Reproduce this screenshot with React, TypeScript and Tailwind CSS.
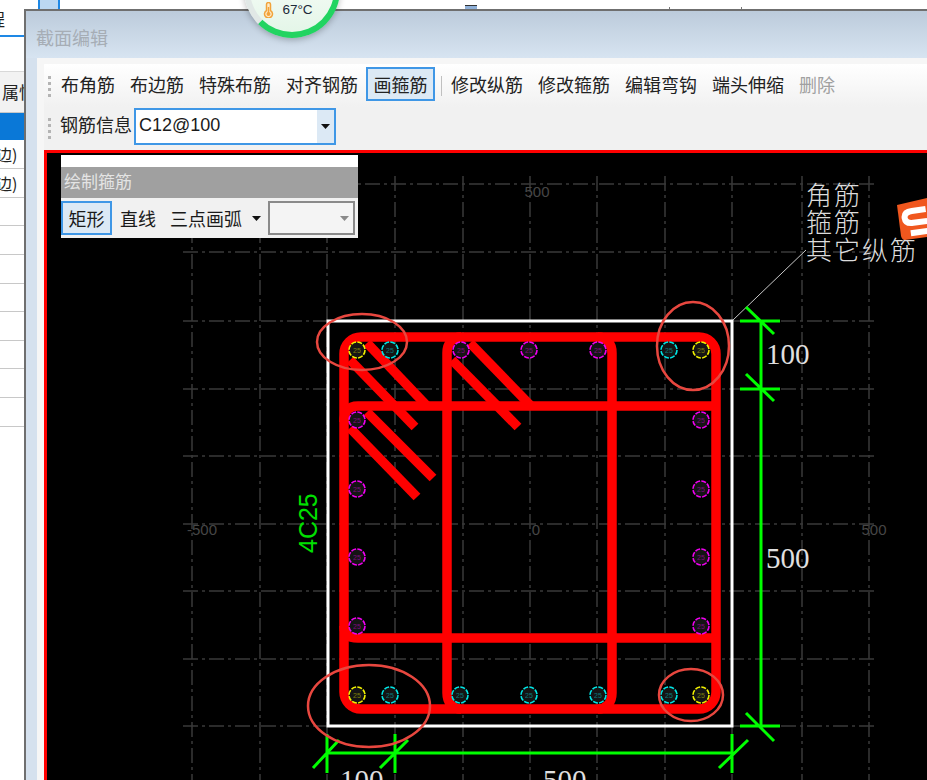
const CJK = "font-['Noto_Sans_CJK_SC','Noto_Sans',sans-serif]";

const tools1 = ["布角筋", "布边筋", "特殊布筋", "对齐钢筋"];
const tools2 = ["修改纵筋", "修改箍筋", "编辑弯钩", "端头伸缩"];

const gridX = [192, 260, 327, 395, 463, 530, 597, 665, 732, 802, 869];
const gridY = [184, 252, 321, 389, 456, 524, 591, 659, 726];

const YELLOW = "#f0f000";
const CYAN = "#00e5e5";
const MAGENTA = "#f000f0";

const bars: [number, number, string][] = [
  [357, 350, YELLOW],
  [390, 350, CYAN],
  [461, 350, MAGENTA],
  [529, 350, MAGENTA],
  [598, 350, MAGENTA],
  [669, 350, CYAN],
  [701, 350, YELLOW],
  [357, 420, MAGENTA],
  [357, 489, MAGENTA],
  [357, 557, MAGENTA],
  [357, 626, MAGENTA],
  [701, 420, MAGENTA],
  [701, 489, MAGENTA],
  [701, 557, MAGENTA],
  [701, 626, MAGENTA],
  [357, 695, YELLOW],
  [390, 695, CYAN],
  [460, 695, CYAN],
  [529, 695, CYAN],
  [598, 695, CYAN],
  [669, 695, CYAN],
  [701, 695, YELLOW],
];

const hooks = [
  [350, 360, 415, 427],
  [367, 343, 428, 407],
  [452, 360, 518, 427],
  [470, 343, 532, 407],
  [350, 428, 417, 497],
  [367, 412, 433, 478],
];

const Grip = () => (
  <div className="flex w-[4px] flex-col gap-[3px]">
    <div className="h-[3px] w-[3px] bg-[#b4b4b4]" />
    <div className="h-[3px] w-[3px] bg-[#b4b4b4]" />
    <div className="h-[3px] w-[3px] bg-[#b4b4b4]" />
    <div className="h-[3px] w-[3px] bg-[#b4b4b4]" />
  </div>
);

const Caret = ({ color = "#111" }: { color?: string }) => (
  <svg width="9" height="5" viewBox="0 0 9 5">
    <path d="M0 0h9L4.5 5z" fill={color} />
  </svg>
);

// 绘图区，坐标直接用截图坐标，viewBox 偏移到画布左上角
const Drawing = () => (
  <svg className="block h-[627px] w-[880px]" viewBox="47 153 880 627">
    <rect x="47" y="153" width="880" height="627" fill="#000" />

    <g stroke="#3a3a3a" strokeWidth="1.5" strokeDasharray="15 4 3 4" fill="none">
      {gridX.map((x) => (
        <line key={x} x1={x} y1="176" x2={x} y2="780" />
      ))}
      {gridY.map((y) => (
        <line key={y} x1="183" y1={y} x2="878" y2={y} />
      ))}
    </g>

    <g fill="#464646" fontSize="15" fontFamily="'Liberation Sans',sans-serif" textAnchor="middle">
      <text x="537" y="197">500</text>
      <text x="202" y="535">-500</text>
      <text x="536" y="535">0</text>
      <text x="874" y="535">500</text>
    </g>

    <rect x="328" y="321" width="404" height="405" fill="none" stroke="#fff" strokeWidth="3" />
    <line x1="733" y1="320" x2="806" y2="250" stroke="#c8c8c8" strokeWidth="1" />

    <g fill="none" stroke="#ff0000" strokeWidth="9.5">
      <rect x="344" y="337" width="372" height="372" rx="17" />
      <path d="M461 709c-8 0-14-6-14-16V353c0-10 6-16 14-16" />
      <path d="M598 709c8 0 14-6 14-16V353c0-10-6-16-14-16" />
      <path d="M344 422c0-10 4-16 14-16H716" />
      <path d="M344 626c0 8 4 12 14 12H716" />
      {hooks.map(([x1, y1, x2, y2]) => (
        <line key={`${x1}-${y1}`} x1={x1} y1={y1} x2={x2} y2={y2} />
      ))}
    </g>

    {bars.map(([x, y, c]) => (
      <g key={`${x}-${y}`}>
        <circle cx={x} cy={y} r="8" fill="#141414" stroke={c} strokeWidth="1.6" strokeDasharray="5 1.3" />
        <text x={x} y={y + 2.5} fontSize="7" textAnchor="middle" fill={c} opacity="0.45" fontFamily="'Liberation Sans',sans-serif">
          25
        </text>
      </g>
    ))}

    <g stroke="#00ff00" strokeWidth="3" fill="none">
      <path d="M761 321V726" />
      <path d="M740 321H780M746 307L774 334" />
      <path d="M740 389H780M746 374L774 401" />
      <path d="M740 726H780M746 713L774 741" />
      <path d="M327 753H733" />
      <path d="M327 734V773M313 768L339 740" />
      <path d="M395 734V773M380 768L408 740" />
      <path d="M732 734V773M719 768L748 740" />
    </g>

    <g fill="#e0e0e0" fontSize="29" fontFamily="'Liberation Serif',serif">
      <text x="766" y="364">100</text>
      <text x="766" y="568">500</text>
      <text x="340" y="790">100</text>
      <text x="543" y="790">500</text>
    </g>
    <text
      x="0"
      y="0"
      transform="translate(317 553) rotate(-90)"
      fill="#00e000"
      fontSize="25"
      fontFamily="'Liberation Sans',sans-serif"
    >
      4C25
    </text>

    <g fill="#dcdcdc" fontSize="26" fontWeight="300" fontFamily="'Noto Sans CJK SC',sans-serif" letterSpacing="2">
      <text x="806" y="205">角筋</text>
      <text x="806" y="232">箍筋</text>
      <text x="806" y="260">其它纵筋</text>
    </g>

    <g fill="none" stroke="#e8473f" strokeWidth="2.5">
      <ellipse cx="362" cy="342" rx="45" ry="28" />
      <ellipse cx="693" cy="346" rx="36" ry="44" />
      <ellipse cx="369" cy="706" rx="61" ry="41" />
      <ellipse cx="691" cy="695" rx="32" ry="26" />
    </g>

    {/* 搜狗输入法图标，右侧被截断 */}
    <path d="M897 205L927 198V237L905 240Q902 240 901 236Z" fill="#f0571e" />
    <path
      d="M927 211H913Q905 211 905 217Q905 223 913 223H927M909 233H927"
      fill="none"
      stroke="#fff"
      strokeWidth="6"
      transform="rotate(-8 912 220)"
    />
  </svg>
);

// 温度悬浮球，压在窗口上面
const TempBall = () => (
  <div className="absolute left-[220px] top-[-58px] z-10 flex h-[96px] w-[96px] items-end justify-center rounded-full border-[6px] border-[#22d461] border-l-[#e1e8e6] bg-gradient-to-b from-white to-[#e4f6e8] pb-[12px] shadow-[0_2px_6px_rgba(0,0,0,0.25)]">
    <div className="mr-[8px] flex items-center gap-[8px]">
      <svg width="11" height="16" viewBox="0 0 11 16">
        <path
          d="M3.5 8.5V2.5a2 2 0 0 1 4 0v6a4 4 0 1 1-4 0z"
          fill="#fdebc8"
          stroke="#f2a33a"
          strokeWidth="1.5"
        />
        <circle cx="5.5" cy="12" r="2" fill="#f2a33a" />
        <path d="M5.5 5v6" stroke="#f2a33a" strokeWidth="1.5" />
      </svg>
      <span className="font-['Liberation_Sans',sans-serif] text-[13.5px] text-[#1d2a3a]">67°C</span>
    </div>
  </div>
);

const LeftPanel = () => (
  <div className={`${CJK} flex w-[24px] shrink-0 flex-col bg-white text-[17px] text-[#222]`}>
    <div className="flex h-[37px] items-start overflow-hidden border-b-2 border-[#1e88e5] pt-[6px]">
      <span className="ml-[-12px]">程</span>
    </div>
    <div className="h-[35px] border-b border-[#d8d8d8]" />
    <div className="flex h-[41px] items-center overflow-hidden border-b border-[#c8c8c8] bg-[#f2f2f2]">
      <span className="whitespace-nowrap pl-[2px]">属性</span>
    </div>
    <div className="h-[27px] bg-[#0a78d7]" />
    <div className="flex h-[29px] items-center overflow-hidden border-b border-[#c8c8c8]">
      <span className="ml-[-4px] whitespace-nowrap text-[16px]">边)</span>
    </div>
    <div className="flex h-[29px] items-center overflow-hidden border-b border-[#c8c8c8]">
      <span className="ml-[-4px] whitespace-nowrap text-[16px]">边)</span>
    </div>
    <div className="h-[28px] border-b border-[#c8c8c8]" />
    <div className="h-[29px] border-b border-[#c8c8c8]" />
    <div className="h-[29px] border-b border-[#c8c8c8]" />
    <div className="h-[28px] border-b border-[#c8c8c8]" />
    <div className="h-[29px] border-b border-[#c8c8c8]" />
    <div className="h-[28px] border-b border-[#c8c8c8]" />
    <div className="h-[29px] border-b border-[#c8c8c8]" />
    <div className="h-[29px] border-b border-[#c8c8c8]" />
  </div>
);

const FloatPanel = () => (
  <div className={`${CJK} absolute left-[14px] top-[2px] w-[297px]`}>
    <div className="h-[12px] bg-white" />
    <div className="flex h-[31px] items-center bg-[#a0a0a0] pb-[3px] pl-[3px] text-[17px] text-[#e4e4e4]">绘制箍筋</div>
    <div className="flex h-[40px] items-center bg-[#f1f1f1] text-[18px] text-[#1a1a1a]">
      <div className="flex h-[34px] w-[51px] items-center justify-center border-2 border-[#3f97e6] bg-[#dce9f5]">矩形</div>
      <span className="ml-[8px]">直线</span>
      <span className="ml-[14px]">三点画弧</span>
      <span className="ml-[10px]">
        <Caret />
      </span>
      <div className="ml-[7px] flex h-[34px] w-[87px] items-center justify-end border-2 border-[#8a8a8a] bg-[#f4f4f4] pr-[4px]">
        <Caret color="#8a8a8a" />
      </div>
    </div>
  </div>
);

export default function App() {
  return (
    <div className="relative flex h-[780px] w-[927px] overflow-hidden bg-white">
      <LeftPanel />

      <div className="relative flex-1">
        {/* 顶部露出的主窗口工具栏 */}
        <div className="flex h-[9px] items-end bg-white pl-[14px]">
          <div className="h-[9px] w-[22px] border-x-2 border-[#1e88e5] bg-[#bcd8f2]" />
          <div className="ml-[405px] h-[4px] w-[12px] border-t border-[#333] bg-[#8fb0d8]" />
          <div className="ml-[192px] h-[2px] w-px bg-[#777]" />
          <div className="ml-[71px] h-[2px] w-px bg-[#777]" />
        </div>

        <div className="flex h-[771px] flex-col border-l-2 border-t-2 border-[#6f6f6f] bg-[#d5e1ee]">
          <div className={`${CJK} flex h-[47px] shrink-0 items-center bg-gradient-to-b from-[#bccbdb] to-[#d7e4f1] pl-[10px] pt-[5px] text-[18px] text-[#a6adb5]`}>
            截面编辑
          </div>

          <div className="ml-[11px] flex flex-1 flex-col overflow-hidden bg-[#f6f6f6] pl-[7px] pt-[6px]">
            <div className={`${CJK} flex h-[43px] shrink-0 items-start bg-gradient-to-b from-white to-[#f1f1f1] pl-[4px] pt-[3px] text-[18px] text-[#222]`}>
              <div className="mt-[9px] mr-[9px]">
                <Grip />
              </div>
              <div className="flex h-[34px] items-center gap-[15px]">
                {tools1.map((t) => (
                  <span key={t}>{t}</span>
                ))}
              </div>
              <div className="ml-[8px] flex h-[34px] w-[69px] items-center justify-center border-2 border-[#3f97e6] bg-[#dce9f5]">
                画箍筋
              </div>
              <div className="ml-[6px] mt-[9px] h-[20px] w-px bg-[#c0c0c0]" />
              <div className="ml-[9px] flex h-[34px] items-center gap-[15px]">
                {tools2.map((t) => (
                  <span key={t}>{t}</span>
                ))}
                <span className="text-[#a0a0a0]">删除</span>
              </div>
            </div>

            <div className={`${CJK} flex h-[43px] shrink-0 items-start bg-[#f1f1f1] pl-[4px] text-[18px] text-[#222]`}>
              <div className="mt-[11px] mr-[8px]">
                <Grip />
              </div>
              <span className="mt-[4px]">钢筋信息</span>
              <div className="ml-[2px] mt-[1px] flex h-[37px] w-[202px] items-center border-2 border-[#3f97e6] bg-white pl-[3px]">
                <span className="flex-1 pb-[2px] font-['Liberation_Sans',sans-serif] text-[18px] text-[#1a1a1a]">C12@100</span>
                <div className="flex h-[33px] w-[17px] items-center justify-center bg-[#dce9f5]">
                  <Caret />
                </div>
              </div>
            </div>

            <div className="relative flex-1 border-l-[3px] border-t-[3px] border-[#ff0000]">
              <Drawing />
              <FloatPanel />
            </div>
          </div>
        </div>

        <TempBall />
      </div>
    </div>
  );
}
